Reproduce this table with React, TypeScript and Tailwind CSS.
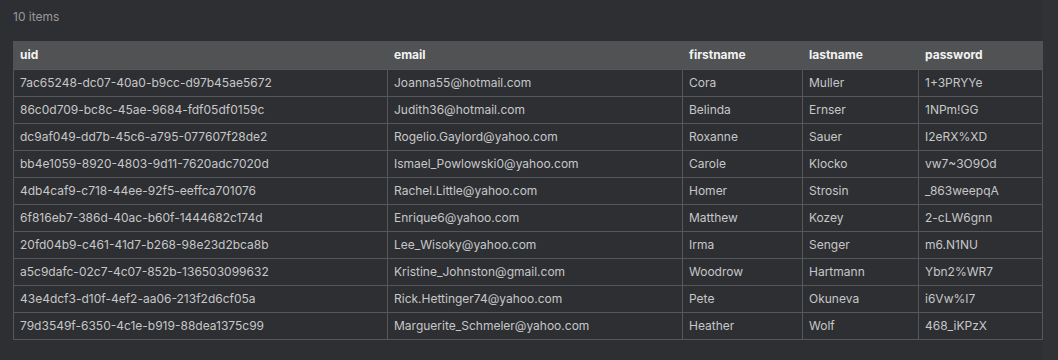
import React from "react";

const rows = [
  ["7ac65248-dc07-40a0-b9cc-d97b45ae5672", "Joanna55@hotmail.com", "Cora", "Muller", "1+3PRYYe"],
  ["86c0d709-bc8c-45ae-9684-fdf05df0159c", "Judith36@hotmail.com", "Belinda", "Ernser", "1NPm!GG"],
  ["dc9af049-dd7b-45c6-a795-077607f28de2", "Rogelio.Gaylord@yahoo.com", "Roxanne", "Sauer", "I2eRX%XD"],
  ["bb4e1059-8920-4803-9d11-7620adc7020d", "Ismael_Powlowski0@yahoo.com", "Carole", "Klocko", "vw7~3O9Od"],
  ["4db4caf9-c718-44ee-92f5-eeffca701076", "Rachel.Little@yahoo.com", "Homer", "Strosin", "_863weepqA"],
  ["6f816eb7-386d-40ac-b60f-1444682c174d", "Enrique6@yahoo.com", "Matthew", "Kozey", "2-cLW6gnn"],
  ["20fd04b9-c461-41d7-b268-98e23d2bca8b", "Lee_Wisoky@yahoo.com", "Irma", "Senger", "m6.N1NU"],
  ["a5c9dafc-02c7-4c07-852b-136503099632", "Kristine_Johnston@gmail.com", "Woodrow", "Hartmann", "Ybn2%WR7"],
  ["43e4dcf3-d10f-4ef2-aa06-213f2d6cf05a", "Rick.Hettinger74@yahoo.com", "Pete", "Okuneva", "i6Vw%I7"],
  ["79d3549f-6350-4c1e-b919-88dea1375c99", "Marguerite_Schmeler@yahoo.com", "Heather", "Wolf", "468_iKPzX"],
];

const headers = ["uid", "email", "firstname", "lastname", "password"];
const widths = ["w-[374px]", "w-[295px]", "w-[120px]", "w-[116px]", "w-[124px]"];

export default function App() {
  return (
    <div className="flex w-[1058px] h-[360px] bg-[#2e2f32] font-['Inter',sans-serif] text-[12px]">
      <div className="flex-1 pl-[13px] pt-[9px]">
        <div className="text-[#98999c] leading-[16px] h-[16px]">10 items</div>
        <table className="mt-[16px] border-collapse table-fixed w-[1029px]">
          <thead>
            <tr className="bg-[#515254] h-[28px]">
              {headers.map((h, i) => (
                <th
                  key={h}
                  className={`${widths[i]} text-left font-bold text-[#f2f2f2] px-[6px] py-0 border-x border-[#515254]`}
                >
                  {h}
                </th>
              ))}
            </tr>
          </thead>
          <tbody>
            {rows.map((r, ri) => (
              <tr key={ri} className="h-[27px]">
                {r.map((c, ci) => (
                  <td
                    key={ci}
                    className="border border-[#56575a] px-[6px] py-0 text-[#c6c7c9] whitespace-nowrap"
                  >
                    {c}
                  </td>
                ))}
              </tr>
            ))}
          </tbody>
        </table>
      </div>
      <div className="w-[16px] bg-[#313235]" />
    </div>
  );
}
